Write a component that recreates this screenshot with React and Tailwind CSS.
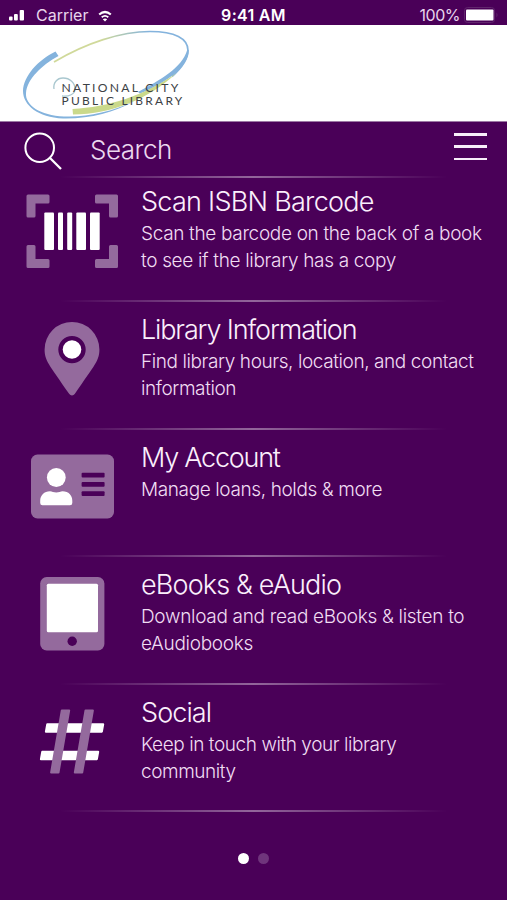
import React from 'react';

const ScanIcon = () => (
  <svg width="92" height="74" viewBox="0 0 92 74" className="block">
    <g fill="#946a9d">
      <path d="M2 .5h20a1.500 1.500 0 0 1 1.500 1.500v6a1.500 1.500 0 0 1-1.500 1.500H9.500V22a1.500 1.500 0 0 1-1.500 1.500H2A1.500 1.500 0 0 1 .5 22V2A1.500 1.500 0 0 1 2 .5Z" />
      <path d="M90.500 .5h-20A1.500 1.500 0 0 0 69 2v6a1.500 1.500 0 0 0 1.500 1.500H83V22a1.500 1.500 0 0 0 1.500 1.500h6A1.500 1.500 0 0 0 92 22V2A1.500 1.500 0 0 0 90.500 .5Z" />
      <path d="M2 74h20a1.500 1.500 0 0 0 1.500-1.500v-6A1.500 1.500 0 0 0 22 65H9.500V52.500A1.500 1.500 0 0 0 8 51H2a1.500 1.500 0 0 0-1.500 1.500v20A1.500 1.500 0 0 0 2 74Z" />
      <path d="M90.500 74h-20a1.500 1.500 0 0 1-1.500-1.500v-6a1.500 1.500 0 0 1 1.500-1.500H83V52.500a1.500 1.500 0 0 1 1.500-1.500h6a1.500 1.500 0 0 1 1.500 1.500v20a1.500 1.500 0 0 1-1.500 1.500Z" />
    </g>
    <g fill="#fff">
      <rect x="18.300" y="18.500" width="9.700" height="37.500" rx="1" />
      <rect x="32" y="18.500" width="5" height="37.500" rx="1" />
      <rect x="41.200" y="18.500" width="5" height="37.500" rx="1" />
      <rect x="50.300" y="18.500" width="9.700" height="37.500" rx="1" />
      <rect x="64" y="18.500" width="9.700" height="37.500" rx="1" />
    </g>
  </svg>
);

const PinIcon = () => (
  <svg width="92" height="74" viewBox="0 0 92 74" className="block">
    <path
      fill="#946a9d"
      fillRule="evenodd"
      d="M43.300 72C22.500 41.500 18.600 38.500 18.600 27.400a27.400 27.400 0 0 1 54.800 0C73.400 38.500 69.500 41.500 48.700 72a3.300 3.300 0 0 1-5.400 0ZM46 13.900a13.700 13.700 0 1 0 0 27.400 13.700 13.700 0 0 0 0-27.400Z"
    />
    <circle cx="46" cy="27.500" r="9.300" fill="#fff" />
  </svg>
);

const AccountIcon = () => (
  <svg width="92" height="74" viewBox="0 0 92 74" className="block">
    <rect x="5" y="4.500" width="83" height="64" rx="6.500" fill="#946a9d" />
    <circle cx="30.300" cy="27.500" r="9.400" fill="#fff" />
    <path
      fill="#fff"
      d="M24 41.300c2 .3 3.800 1.200 6.300 1.200s4.300-.9 6.300-1.200c6 0 9.700 4.200 9.700 9.500V53a2.300 2.300 0 0 1-2.300 2.300H16.500A2.300 2.300 0 0 1 14.200 53v-2.200c0-5.300 4-9.500 9.800-9.500Z"
    />
    <g fill="#4a0058">
      <rect x="55.600" y="22.800" width="23" height="4.800" rx="1" />
      <rect x="55.600" y="32" width="23" height="4.800" rx="1" />
      <rect x="55.600" y="41.200" width="23" height="4.800" rx="1" />
    </g>
  </svg>
);

const TabletIcon = () => (
  <svg width="92" height="74" viewBox="0 0 92 74" className="block">
    <rect x="14.200" y="0" width="64.200" height="73.500" rx="6.500" fill="#946a9d" />
    <rect x="20.800" y="6.700" width="51.200" height="48.500" rx="1.500" fill="#fff" />
    <circle cx="46.200" cy="64.200" r="4.700" fill="#4a0058" />
  </svg>
);

const HashIcon = () => (
  <svg width="92" height="74" viewBox="0 0 92 74" className="block">
    <g fill="#fff" stroke="#fff" strokeWidth="2" strokeLinejoin="round">
      <path d="M21.200 19.300h56l-1.300 7.400h-56Z" />
      <path d="M16.200 46.800h56l-1.300 7.400h-56Z" />
    </g>
    <g fill="#946a9d" stroke="#946a9d" strokeWidth="2" strokeLinejoin="round">
      <path d="M35.800 5.400h7.400l-10.700 62.200h-7.400Z" />
      <path d="M59.500 5.400h7.400l-10.700 62.200h-7.400Z" />
    </g>
  </svg>
);

const menuItems = [
  {
    title: 'Scan ISBN Barcode',
    titleClass: 'tracking-[-0.730px]',
    lines: ['Scan the barcode on the back of a book', 'to see if the library has a copy'],
    textClass: 'tracking-[-0.330px]',
    icon: ScanIcon
  },
  {
    title: 'Library Information',
    titleClass: 'tracking-[-1.150px]',
    lines: ['Find library hours, location, and contact', 'information'],
    textClass: 'tracking-[-0.410px]',
    icon: PinIcon
  },
  {
    title: 'My Account',
    titleClass: 'tracking-[-1.250px]',
    lines: ['Manage loans, holds & more'],
    textClass: 'tracking-[-0.380px]',
    icon: AccountIcon
  },
  {
    title: 'eBooks & eAudio',
    titleClass: 'tracking-[-0.850px]',
    lines: ['Download and read eBooks & listen to', 'eAudiobooks'],
    textClass: 'tracking-[-0.310px]',
    icon: TabletIcon
  },
  {
    title: 'Social',
    titleClass: 'tracking-[-0.900px]',
    lines: ['Keep in touch with your library', 'community'],
    textClass: 'tracking-[-0.430px]',
    icon: HashIcon
  }
];

const Divider = () => (
  <div className="mx-[60px] h-[2px] shrink-0 bg-linear-to-r from-white/0 via-white/40 to-white/0" />
);

const StatusBar = () => (
  <div className="grid h-[25px] grid-cols-3 items-center px-2 pt-[5px] text-[16px] leading-none text-[#e8d5ec]">
    <div className="flex items-center">
      <svg width="18" height="12" viewBox="0 0 18 12" fill="#fff">
        <rect x="1" y="7.500" width="3.600" height="4" rx="1" />
        <rect x="6" y="5" width="3.800" height="6.500" rx="1" />
        <rect x="11.700" y="1" width="4.300" height="10.500" rx="1" />
      </svg>
      <span className="ml-[10px]">Carrier</span>
      <svg width="14" height="12" viewBox="0 0 14 12" className="ml-[10px] translate-y-px" fill="none" stroke="#fff">
        <path d="M1.200 4.500Q7-.5 12.800 4.500" strokeWidth="2.200" />
        <path d="M3.700 7.200Q7 4.500 10.300 7.200" strokeWidth="1.800" />
        <path d="M7 11.500 4.800 9.200Q7 7.600 9.200 9.200Z" fill="#fff" stroke="none" />
      </svg>
    </div>
    <div className="text-center font-semibold tracking-[0.300px] text-white">9:41 AM</div>
    <div className="flex items-center justify-end">
      <span className="tracking-[-0.500px]">100%</span>
      <svg width="36" height="16" viewBox="0 0 36 16" className="ml-[3px]">
        <rect x="1.500" y=".5" width="30" height="15" rx="3" fill="none" stroke="#61256d" />
        <rect x="3" y="2.500" width="27.500" height="11" rx="1" fill="#fff" />
        <path d="M33.500 5.500v5q2-2.500 0-5Z" fill="#61256d" />
      </svg>
    </div>
  </div>
);

const Logo = () => (
  <svg width="200" height="96" viewBox="0 25 200 96" className="block">
    <defs>
      <linearGradient id="top" x1="54" y1="0" x2="189" y2="0" gradientUnits="userSpaceOnUse">
        <stop offset="0.350" stopColor="#d0d99a" />
        <stop offset="0.700" stopColor="#84b3dd" />
      </linearGradient>
    </defs>
    <path d="M54 62C86 43 121 31.500 150 31.500c25 0 38 7 38 19 0 9-7 18-16 26" fill="none" stroke="url(#top)" strokeWidth="1.700" />
    <path d="M188.800 50C188 66 170 81 140 93.500L138 92C160 80 182 68 187.200 50Z" fill="#84b3dd" />
    <path d="M55.500 51.500 58.500 56C42 65 27 79 26 93c-1 12 14 22.500 38 23.500 23 1 46-4.500 71-15.500-22 11.500-45 18-72 17.500-25-1-40-13.500-40-27.500C23.500 76 38 60 55.500 51.500Z" fill="#84b3dd" />
    <path d="M72.500 109C108 107 144 96 176.500 73 149 99 112 114 73 114.500Z" fill="#cad98b" />
    <path d="M54 89c-1-6 3-11 9-11 7 0 12 5 12 11 0 5-6 8-13 7" fill="none" stroke="#a9c7cf" strokeWidth="1.300" />
    <g fill="#3c4145" fontFamily="Lato, sans-serif" fontSize="10.700">
      <text x="61.500" y="92" textLength="119" lengthAdjust="spacingAndGlyphs" letterSpacing="2">NATIONAL CITY</text>
      <text x="61.500" y="105" textLength="123" lengthAdjust="spacingAndGlyphs" letterSpacing="2">PUBLIC LIBRARY</text>
    </g>
  </svg>
);

const MenuRow = ({ item, first }) => {
  const Icon = item.icon;

  return (
    <li className={`flex flex-col ${first ? 'h-[124px] pt-[16px]' : 'h-[127.600px] pt-[20px]'}`}>
      <div className="flex flex-1 pl-[26px]">
        <Icon />
        <div className="-mt-[9px] pl-[23px] whitespace-nowrap">
          <h2 className={`text-[27px] leading-[34px] font-light text-[#fbeffc] ${item.titleClass}`}>{item.title}</h2>
          <p className={`mt-px text-[19px] leading-[27px] font-light text-[#f0ddf3] ${item.textClass}`}>
            {item.lines.map((line) => (
              <span key={line} className="block">{line}</span>
            ))}
          </p>
        </div>
      </div>
      <Divider />
    </li>
  );
};

const App = () => {
  return (
    <div className="flex h-[900px] w-[507px] flex-col overflow-hidden bg-[#4a0058] font-[Inter,sans-serif]">
      <StatusBar />
      <header className="h-[97px] border-b border-[#9d78a5] bg-white">
        <Logo />
      </header>
      <div className="flex h-[54px] shrink-0 pl-[24px]">
        <svg width="39" height="40" viewBox="0 0 39 40" className="mt-[10px]" fill="none" stroke="#fff" strokeWidth="2">
          <circle cx="15.700" cy="15.700" r="14.300" />
          <path d="m26 26 11 11" strokeWidth="2.300" />
        </svg>
        <span className="mt-[10px] ml-[27px] text-[26px] leading-[36px] font-light tracking-[-0.500px] text-[#ecd9ef]">Search</span>
        <button className="mt-[11px] mr-[20px] ml-auto flex h-[27px] w-[33px] flex-col justify-between">
          <span className="h-[2.500px] w-full bg-[#f8eef9]" />
          <span className="h-[2.500px] w-full bg-[#f8eef9]" />
          <span className="h-[2.500px] w-full bg-[#f8eef9]" />
        </button>
      </div>
      <Divider />
      <ul>
        {menuItems.map((item, index) => (
          <MenuRow key={item.title} item={item} first={index === 0} />
        ))}
      </ul>
      <div className="mt-[41px] flex justify-center gap-[9px]">
        <span className="h-[11px] w-[11px] rounded-full bg-white" />
        <span className="h-[11px] w-[11px] rounded-full bg-[#6f357c]" />
      </div>
    </div>
  );
};

export default App;
